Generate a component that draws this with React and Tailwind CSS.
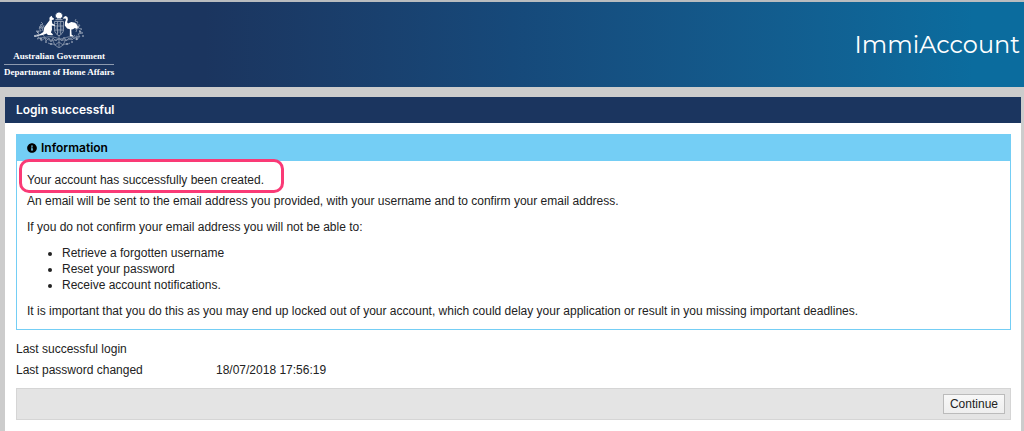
import React from 'react';
import { FaInfoCircle } from 'react-icons/fa';

const limits = [
  'Retrieve a forgotten username',
  'Reset your password',
  'Receive account notifications.',
]

const history = [
  { label: 'Last successful login', value: '' },
  { label: 'Last password changed', value: '18/07/2018 17:56:19' },
]

function Crest() {
  return (
    <svg className="h-9 w-[52px]" viewBox="0 0 52 36" fill="none" stroke="#fff" aria-hidden="true">
      {/* star and wreath */}
      <path fill="#fff" stroke="none" d="M26 0l.9 1.1 1.4-.3.1 1.4 1.3.6-.7 1.2.5 1.3-1.4.3-.6 1.1-1.5-.5-1.5.5-.6-1.1-1.4-.3.5-1.3-.7-1.2 1.3-.6.1-1.4 1.4.3z" />
      <path strokeWidth="1" opacity=".6" d="M22.5 7.7h7" />

      {/* kangaroo */}
      <path fill="#fff" stroke="none" d="M17.6 4.6l1.2-.9.4 1.6 1.8 1.3-.4 1.2-1.8.3.4 3.4 2.7 1.4-.3 1-2.8-.4.2 4-1.1 3.1 2 1.7-.4.9-4.6-.2-1.3-1.6-3.8 1.7-8.6 1.4 6.2-2.5 2.9-2.1 1-4.6 2.5-3.4 2.8-3.6-.2-2.5z" />

      {/* emu */}
      <path fill="#fff" stroke="none" d="M30.8 5l1.8-.9 1.8.9.5 2.3-.8 3 1 1.3 3.2-1.5 4 .7 2.2 3.2-.2 3-2.4-1.1-2 1.3-1.6.3.3 5.2 1.7 1-.1.7-3.4-.2.1-6.9-2.7-.7-2.4-3.1.2-3.4 1-2.3-.6-1.3-2.5.2z" />

      {/* shield */}
      <g strokeWidth=".8" opacity=".6">
        <path d="M21.5 9.5h9v8c0 3-2 5-4.5 6.3-2.5-1.3-4.5-3.3-4.5-6.3zM21.5 14h9M21.5 18h9M24.5 9.5v13M27.7 9.5v13" />
        <path d="M22.5 11.5h1.2M25.5 12h1.3M28.5 16h1M22.7 16h1.2M25.5 20h1" />
      </g>

      {/* wattle branches */}
      <g strokeWidth=".9" opacity=".45">
        <path d="M8 10l2 2-3 1 3 3-4 0 2 3-5 0 3 3-5 2 5 1-2 2 4-1 0 3 4-3 1 3 3-3 2 4 2-4 3 3 3-3 3 3 2-4 2 4 3-3 3 2 2-2 3 2-1-4 4 1-2-3 5-1-4-2 3-2-4-1 2-3-4 0 2-3-3-1 1-2" />
        <path d="M6 26c6 0 9-2 14-1s8 3 12 1 8-1 14 0M10 23c3 5 8 6 12 5s6 0 8 0 8 1 12-5M9 12l0 5M11 13l-2 6M43 12l0 6M45 14l-2 6" />
        <path d="M15 31c3 2 5 0 7 2l4-3 4 3c2-2 5 0 7-2M22 33l4 3 4-3M19 27l3 6M33 27l-3 6M26 24v11" />
      </g>
      <g fill="#fff" stroke="none" opacity=".45">
        <circle cx="5" cy="20" r="1" /><circle cx="7" cy="15" r="1" /><circle cx="2" cy="24" r="1" />
        <circle cx="8" cy="27" r="1" /><circle cx="13" cy="30" r="1" /><circle cx="18" cy="32" r="1" />
        <circle cx="45" cy="15" r="1" /><circle cx="47" cy="20" r="1" /><circle cx="50" cy="24" r="1" />
        <circle cx="44" cy="27" r="1" /><circle cx="39" cy="30" r="1" /><circle cx="34" cy="32" r="1" />
      </g>
    </svg>
  );
}

function Header() {
  return (
    <header className="flex items-center justify-between border-t-2 border-[#b9bcbf] bg-linear-to-r from-[#1b355f] from-20% via-[#16497a] via-50% to-[#0b6c9e] to-95% h-[87px] pl-1 pr-1 text-white">
      <div className="flex flex-col items-center font-['Liberation_Serif',serif] text-[9px] leading-3 font-bold">
        <Crest />
        <p className="mt-[2px]">Australian Government</p>
        <p className="mt-[2px] border-t border-[#8d9aaf] pt-px">Department of Home Affairs</p>
      </div>
      <h1 className="font-['Montserrat','Inter',sans-serif] text-2xl leading-8">ImmiAccount</h1>
    </header>
  );
}

function Information() {
  return (
    <section className="border border-[#74cef5]">
      <h3 className="flex items-center gap-1 bg-[#74cef5] px-[10px] h-[26px] font-['Inter',sans-serif] font-semibold text-black">
        <FaInfoCircle className="size-[10px]" />
        Information
      </h3>
      <div className="px-[10px] pt-[11px] pb-[10px]">
        <p className="relative w-fit">
          Your account has successfully been created.
          <span className="absolute -top-[13px] -left-2 -right-5 -bottom-[5px] rounded-[10px] border-3 border-[#fa3a76]" />
        </p>
        <p className="mt-[5px]">
          An email will be sent to the email address you provided, with your username and to confirm your email address.
        </p>
        <p className="mt-[10px]">If you do not confirm your email address you will not be able to:</p>
        <ul className="my-[10px] list-disc pl-[35px]">
          {limits.map(item => <li key={item}>{item}</li>)}
        </ul>
        <p>
          It is important that you do this as you may end up locked out of your account, which could delay your application or result in you missing important deadlines.
        </p>
      </div>
    </section>
  );
}

function App() {
  return (
    <div className="min-h-screen flex flex-col bg-[#cccccc] font-['Liberation_Sans',sans-serif] text-xs leading-4 text-[#222]">
      <Header />

      <main className="mt-[10px] ml-[5px] mr-[3px] grow bg-white">
        <h2 className="bg-[#1b355f] px-[11px] py-[5px] font-['Inter',sans-serif] font-semibold text-white">Login successful</h2>

        <div className="pl-[11px] pr-[10px] pt-[11px] pb-[11px]">
          <Information />

          <dl className="mt-[11px] grid grid-cols-[200px_1fr] gap-y-[5px]">
            {history.map(({label, value}) => (
              <React.Fragment key={label}>
                <dt>{label}</dt>
                <dd>{value}</dd>
              </React.Fragment>
            ))}
          </dl>

          <div className="mt-[10px] flex justify-end border border-[#d5d5d5] bg-[#e4e4e4] p-[5px]">
            <button type="button" className="border border-[#bbb] bg-linear-to-b from-[#f8f8f8] to-[#eee] px-[6px] py-px">
              Continue
            </button>
          </div>
        </div>
      </main>
    </div>
  );
}

export default App;
